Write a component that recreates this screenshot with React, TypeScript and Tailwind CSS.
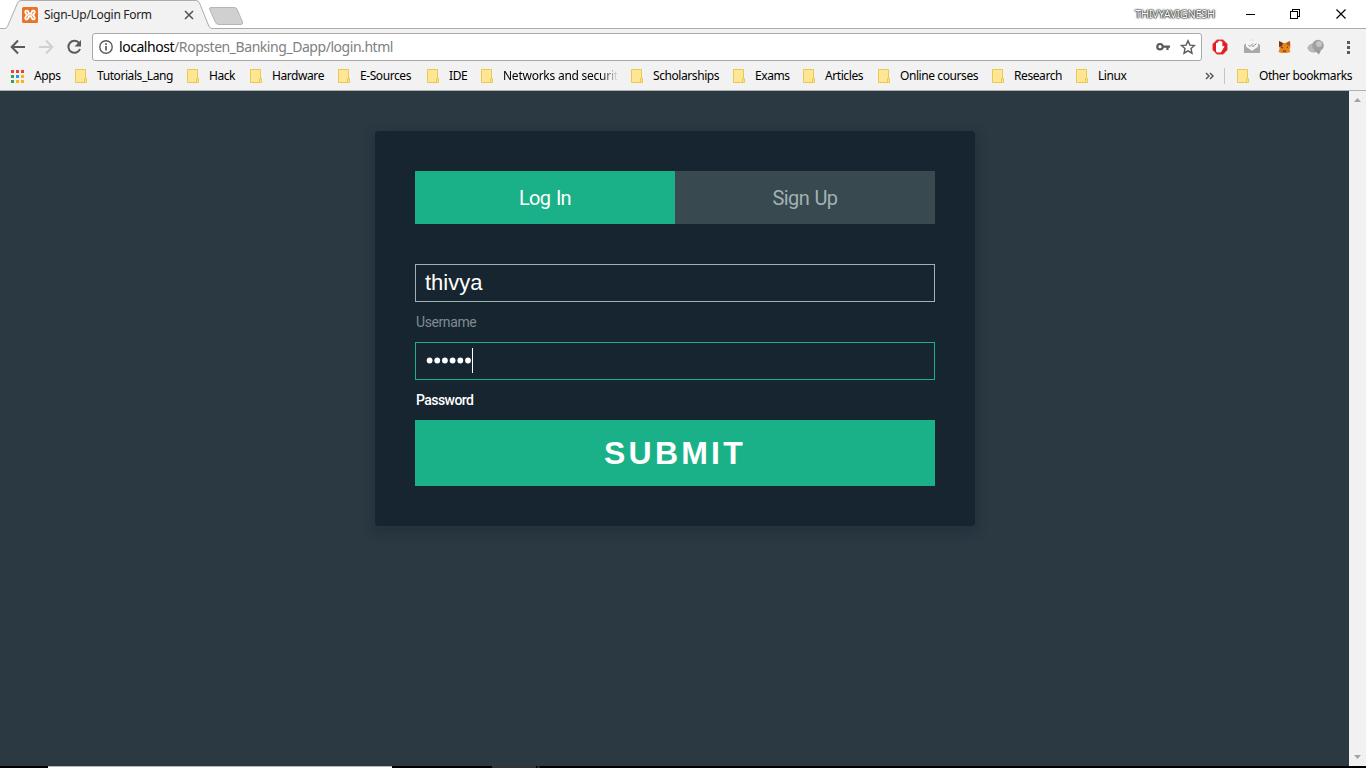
import React from "react";

const ui = "font-['Noto_Sans','Open_Sans',sans-serif]";
const titillium = "font-['Roboto','Open_Sans',sans-serif]";

const bookmarks = [
  { label: "Tutorials_Lang", width: "w-[112px]" },
  { label: "Hack", width: "w-[63px]" },
  { label: "Hardware", width: "w-[88px]" },
  { label: "E-Sources", width: "w-[89px]" },
  { label: "IDE", width: "w-[54px]" },
  { label: "Networks and securit", width: "w-[150px]", fade: true },
  { label: "Scholarships", width: "w-[102px]" },
  { label: "Exams", width: "w-[70px]" },
  { label: "Articles", width: "w-[75px]" },
  { label: "Online courses", width: "w-[114px]" },
  { label: "Research", width: "w-[84px]" },
  { label: "Linux", width: "w-[60px]" },
];

function Folder() {
  return (
    <svg className="mr-[10px] h-[14px] w-[12px] shrink-0" viewBox="0 0 12 14">
      <path d="M.5.5h10v13H.5z" fill="#ffe694" stroke="#ebc850" />
      <path d="M9.5 9.5h2v4h-2z" fill="#ffe694" stroke="#ebc850" />
    </svg>
  );
}

function TabStrip() {
  return (
    <header className="relative flex h-[29px] shrink-0 bg-white">
      <svg className="absolute inset-0" width="1366" height="29" viewBox="0 0 1366 29">
        <path
          d="M0 28.5H4.5Q6.5 28.5 7.5 26.5L17.5 3Q18.6.5 21 .5H196Q198.500.5 199.500 3L209 26.500Q210 28.500 212 28.500H1366V30H0Z"
          fill="#f2f2f2"
          stroke="#acacac"
        />
        <path
          d="M211 7.500H234.500Q236.500 7.500 237.200 9.500L242.500 22Q243.200 24.500 241 24.500H218.500Q216.500 24.500 215.500 22.500L209.700 9.500Q209 7.500 211 7.500Z"
          fill="#d0d0d0"
          stroke="#b5b5b5"
        />
      </svg>
      <div className="relative flex w-[211px] items-center pl-[22px]">
        <svg className="mt-px h-4 w-4 shrink-0" viewBox="0 0 16 16">
          <rect width="16" height="16" rx="1.500" fill="#e97428" />
          <path
            d="M5.200 3.700C3.700 3.300 2.800 4.500 3.500 5.700L5 8 3.500 10.300C2.800 11.500 3.700 12.700 5.200 12.300 6.300 12 6.600 10.500 6.900 9.300H9.100C9.400 10.500 9.700 12 10.800 12.300 12.300 12.700 13.200 11.500 12.500 10.300L11 8 12.500 5.700C13.200 4.500 12.300 3.300 10.800 3.700 9.700 4 9.400 5.500 9.100 6.700H6.900C6.600 5.500 6.300 4 5.200 3.700Z"
            fill="none"
            stroke="#fff"
            strokeWidth="1.900"
          />
        </svg>
        <span className={`ml-[6px] w-[134px] whitespace-nowrap text-[12px] tracking-[-0.3px] text-[#222] ${ui}`}>
          Sign-Up/Login Form
        </span>
        <svg className="ml-[6px] mt-px h-[10px] w-[10px] shrink-0" viewBox="0 0 10 10">
          <path d="M1 1l8 8M9 1l-8 8" stroke="#555" strokeWidth="1.600" />
        </svg>
      </div>
      <div className="relative ml-auto flex items-center">
        <span
          className={`mr-[29px] w-[82px] whitespace-nowrap text-[11px] tracking-[-0.300px] text-white [text-shadow:0_0_1px_#222,0_0_1px_#222,0_0_2px_#333,0_0_2px_#555] ${ui}`}
        >
          THIVYAVIGNESH
        </span>
        <svg className="h-[28px] w-[120px]" viewBox="1246 0 120 28" fill="none" stroke="#000" shapeRendering="crispEdges">
          <path d="M1245 13.500h10" />
          <path d="M1290.500 10.500h7v7h-7zM1292.500 10V8.500h7v7H1298" />
          <path d="M1336.500 8.500l9 9M1345.500 8.500l-9 9" shapeRendering="auto" strokeWidth="1.200" />
        </svg>
      </div>
    </header>
  );
}

function Toolbar() {
  return (
    <div className="flex h-[33px] shrink-0 items-center bg-[#f2f2f2] pt-[3px]">
      <svg className="h-[16px] w-[92px] shrink-0" viewBox="0 39 92 16" fill="none" strokeWidth="2">
        <path d="M25 47H12M18 40.500L11.700 47l6.300 6.500" stroke="#5a5a5a" />
        <path d="M39 47h13M46 40.500l6.300 6.500-6.300 6.500" stroke="#d0d0d0" />
        <path d="M79.200 43.200A6 6 0 1 0 80 49" stroke="#5a5a5a" />
        <path d="M81 40v6.500h-6.500z" fill="#5a5a5a" />
      </svg>
      <div className="flex h-[28px] w-[1110px] shrink-0 items-center rounded-[3px] border border-[#a9a9a9] bg-white pl-[5px]">
        <svg className="h-4 w-4 shrink-0" viewBox="0 0 16 16" fill="none" stroke="#5a5a5a">
          <circle cx="8" cy="8" r="6.200" strokeWidth="1.400" />
          <path d="M8 7v4.500M8 4.300v1.700" strokeWidth="1.700" />
        </svg>
        <span className={`ml-[5px] whitespace-nowrap pb-px text-[14px] tracking-[-0.450px] text-[#808080] ${ui}`}>
          <span className="text-black">localhost</span>/Ropsten_Banking_Dapp/login.html
        </span>
        <svg className="ml-auto mr-[5px] h-[18px] w-[42px]" viewBox="1154 38 42 18" fill="none" stroke="#5a5a5a">
          <circle cx="1160" cy="46.700" r="2.700" strokeWidth="2.200" />
          <path d="M1163 46.700h7M1167.500 46v4" strokeWidth="2.200" />
          <path d="M1188 40.800l1.900 4.300 4.600.4-3.500 3.100 1 4.600-4-2.400-4 2.400 1-4.600-3.500-3.100 4.600-.4z" strokeWidth="1.400" />
        </svg>
      </div>
      <svg className="h-[20px] w-[164px] shrink-0" viewBox="1202 37 164 20">
        <path d="M1217 39.500h6l4.500 4.500v6l-4.500 4.500h-6l-4.500-4.500v-6z" fill="#e31c24" stroke="#d8b0b0" strokeWidth=".5" />
        <path d="M1216 48v-4.800q.8-1 1.600 0v-1.500q.8-1 1.600 0v-.6q.8-1 1.600 0v.6q.8-1 1.600 0v5l1-.8q1-.3 1 .7l-2.500 4.500-1 1.400h-4l-.9-1.500z" fill="#fff" />
        <path d="M1244 45l8-5.500 8 5.500v8h-16z" fill="#a8a8a8" />
        <path d="M1246 41.500l6-1.500 6 1.500v5.500l-6 4-6-4z" fill="#f5f5f5" />
        <path d="M1244 45.500l8 5.500 8-5.500v7.500h-16z" fill="#a8a8a8" />
        <path d="M1248.500 45l1.500 1.500 3-3M1252 45.700l1 .8 3.500-3" fill="none" stroke="#888" />
        <path d="M1279 41l4 2h3l4-2 .5 5-1 4 1 2-4 1h-5l-3-1 1-3z" fill="#e8821e" />
        <path d="M1279 41l4 2-1 3-3 1z" fill="#6c3920" />
        <path d="M1290 41l-4 2 1 2 3 1z" fill="#b65616" />
        <path d="M1281 47l2 1M1287 47.500l1-.5M1283 51h3" stroke="#542c17" />
        <ellipse cx="1314" cy="48" rx="6" ry="4" fill="#bbb" stroke="#aaa" />
        <circle cx="1318" cy="45.500" r="5.800" fill="#a0a0a0" />
        <circle cx="1319" cy="44" r="3" fill="#c5c5c5" />
        <path d="M1314 50l5 4.500 2-4z" fill="#999" />
        <path d="M1347 41h3v3h-3zM1347 46h3v3h-3zM1347 51h3v3h-3z" fill="#5a5a5a" />
      </svg>
    </div>
  );
}

function BookmarksBar() {
  return (
    <div className={`flex h-[29px] shrink-0 items-center border-b border-[#b0b0b3] bg-[#f2f2f2] pl-[11px] text-[12px] tracking-[-0.42px] text-black ${ui}`}>
      <svg className="mr-[10px] h-[13px] w-[13px] shrink-0" viewBox="0 0 13 13" shapeRendering="crispEdges">
        <path d="M0 0h3v3H0zM5 0h3v3H5zM10 0h3v3h-3z" fill="#eb4132" />
        <path d="M0 5h3v3H0zM0 10h3v3H0z" fill="#30a354" />
        <path d="M5 5h3v3H5z" fill="#2196f3" />
        <path d="M10 5h3v3h-3zM5 10h3v3H5zM10 10h3v3h-3z" fill="#fbb315" />
      </svg>
      <span className="w-[41px] shrink-0">Apps</span>
      {bookmarks.map((b) => (
        <div key={b.label} className={`flex shrink-0 items-center whitespace-nowrap ${b.width}`}>
          <Folder />
          {b.fade ? (
            <span className="tracking-[-0.25px] [mask-image:linear-gradient(to_right,black_86%,transparent)]">{b.label}</span>
          ) : (
            <span>{b.label}</span>
          )}
        </div>
      ))}
      <svg className="ml-[69px] h-[8px] w-[10px] shrink-0" viewBox="0 0 10 8" fill="none" stroke="#5a5a5a" strokeWidth="1.500">
        <path d="M1 1l3 3-3 3M5 1l3 3-3 3" />
      </svg>
      <div className="ml-[9px] mr-[12px] h-[16px] w-px shrink-0 bg-[#c4c4c4]" />
      <Folder />
      <span className="whitespace-nowrap">Other bookmarks</span>
    </div>
  );
}

function LoginCard() {
  return (
    <section className={`h-[395px] w-[600px] rounded-[4px] bg-[#162530] p-[40px] shadow-[0_4px_10px_4px_rgba(19,35,47,0.3)] ${titillium}`}>
      <div className="mb-[40px] flex h-[53px] text-[20px]">
        <div className="flex flex-1 items-center justify-center bg-[#1ab188] tracking-[-0.750px] [word-spacing:1.500px] text-white">Log In</div>
        <div className="flex flex-1 items-center justify-center bg-[#394950] tracking-[-0.600px] [word-spacing:1px] text-[#a0b3b0]">Sign Up</div>
      </div>
      <div className="flex h-[38px] items-center border border-[#a0b3b0] pb-[2px] pl-[9px] font-['Liberation_Sans',Arial,sans-serif] text-[22px] text-white">
        thivya
      </div>
      <div className="flex h-[40px] items-center pl-px text-[14px] tracking-[-0.4px] text-[#7f8b90]">Username</div>
      <div className="flex h-[38px] items-center border border-[#1ab188] pl-[10px]">
        <svg className="h-[26px] w-[48px]" viewBox="0 0 48 26" fill="#fff">
          <circle cx="3.600" cy="12.500" r="2.900" />
          <circle cx="11.250" cy="12.500" r="2.900" />
          <circle cx="18.900" cy="12.500" r="2.900" />
          <circle cx="26.600" cy="12.500" r="2.900" />
          <circle cx="34.300" cy="12.500" r="2.900" />
          <circle cx="42" cy="12.500" r="2.900" />
          <path d="M46 0h1v25h-1z" />
        </svg>
      </div>
      <div className="flex h-[40px] items-center pl-px text-[14px] font-medium tracking-[-0.550px] text-white">Password</div>
      <div className="flex h-[66px] items-center justify-center bg-[#1ab188] font-['Liberation_Sans',Arial,sans-serif] text-[32px] font-bold tracking-[3.200px] text-white">
        SUBMIT
      </div>
    </section>
  );
}

export default function App() {
  return (
    <div className="flex h-[768px] w-[1366px] flex-col overflow-hidden">
      <TabStrip />
      <Toolbar />
      <BookmarksBar />
      <div className="flex h-[675px] shrink-0">
        <main className="flex flex-1 items-start justify-center bg-[#2b3943] pl-px pt-[40px]">
          <LoginCard />
        </main>
        <div className="flex w-[17px] flex-col items-center justify-between bg-[#f1f1f1] py-[7px]">
          <svg className="h-[4px] w-[7px]" viewBox="0 0 7 4"><path d="M0 4L3.500 0 7 4z" fill="#a3a3a3" /></svg>
          <svg className="h-[4px] w-[7px]" viewBox="0 0 7 4"><path d="M0 0L3.500 4 7 0z" fill="#a3a3a3" /></svg>
        </div>
      </div>
      <footer className="flex h-[2px] shrink-0 bg-black">
        <div className="ml-[48px] w-[344px] border-t border-[#b8b8b8] bg-white" />
        <div className="ml-[100px] w-[44px] bg-[#333]" />
        <div className="ml-px w-[3px] bg-[#222]" />
      </footer>
    </div>
  );
}
